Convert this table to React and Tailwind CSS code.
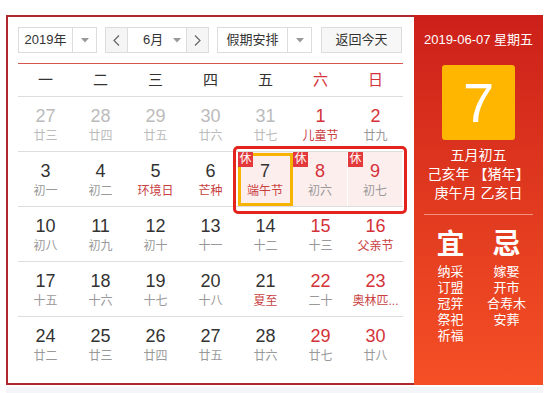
import React from 'react';

const FONT = { fontFamily: '"Liberation Sans", "Noto Sans CJK SC", sans-serif' };

const weeks = [
  [
    { d: 27, l: '廿三', dim: true },
    { d: 28, l: '廿四', dim: true },
    { d: 29, l: '廿五', dim: true },
    { d: 30, l: '廿六', dim: true },
    { d: 31, l: '廿七', dim: true },
    { d: 1, l: '儿童节', red: true, fest: true },
    { d: 2, l: '廿九', red: true },
  ],
  [
    { d: 3, l: '初一' },
    { d: 4, l: '初二' },
    { d: 5, l: '环境日', fest: true },
    { d: 6, l: '芒种', fest: true },
    { d: 7, l: '端午节', fest: true, rest: true, today: true },
    { d: 8, l: '初六', red: true, rest: true },
    { d: 9, l: '初七', red: true, rest: true },
  ],
  [
    { d: 10, l: '初八' },
    { d: 11, l: '初九' },
    { d: 12, l: '初十' },
    { d: 13, l: '十一' },
    { d: 14, l: '十二' },
    { d: 15, l: '十三', red: true },
    { d: 16, l: '父亲节', red: true, fest: true },
  ],
  [
    { d: 17, l: '十五' },
    { d: 18, l: '十六' },
    { d: 19, l: '十七' },
    { d: 20, l: '十八' },
    { d: 21, l: '夏至', fest: true },
    { d: 22, l: '二十', red: true },
    { d: 23, l: '奥林匹...', red: true, fest: true },
  ],
  [
    { d: 24, l: '廿二' },
    { d: 25, l: '廿三' },
    { d: 26, l: '廿四' },
    { d: 27, l: '廿五' },
    { d: 28, l: '廿六' },
    { d: 29, l: '廿七', red: true },
    { d: 30, l: '廿八', red: true },
  ],
];

function Arrow() {
  return (
    <div className="w-[24px] h-full flex items-center justify-center border-l border-[#dcdcdc]">
      <svg width="8" height="5" viewBox="0 0 8 5">
        <path d="M0 0 L8 0 L4 4.5 Z" fill="#999" />
      </svg>
    </div>
  );
}

function DayCell({ c }) {
  let numColor = 'text-[#333]';
  if (c.dim) numColor = 'text-[#bbb]';
  else if (c.red) numColor = 'text-[#d4323a]';
  let lunarColor = 'text-[#999]';
  if (c.dim) lunarColor = 'text-[#bbb]';
  else if (c.fest) lunarColor = 'text-[#c9403f]';
  return (
    <div
      className={`relative w-[55px] h-full flex flex-col items-center pt-[8px] ${
        c.rest ? 'bg-[#fdeeee] border-r border-white' : ''
      }`}
    >
      {c.today && (
        <div className="absolute left-0 top-[1px] w-[55px] h-[53px] border-[3px] border-[#f6b400]" />
      )}
      {c.rest && (
        <div className="absolute left-0 top-0 w-[15px] h-[15px] bg-[#e4393c] text-white text-[12px] leading-[15px] text-center">
          休
        </div>
      )}
      <div className={`text-[18px] leading-[22px] ${numColor}`}>{c.d}</div>
      <div className={`text-[12px] leading-[16px] mt-[1px] ${lunarColor}`}>{c.l}</div>
    </div>
  );
}

export default function App() {
  return (
    <div className="w-[557px] h-[393px] bg-white overflow-hidden" style={FONT}>
      <div className="ml-[6px] mt-[15px] w-[537px] h-[370px] flex">
        {/* Calendar */}
        <div className="w-[408px] h-full border-l-2 border-t-2 border-b-2 border-[#b0282d] pl-[10px] pt-[10px]">
          <div className="flex h-[26px] text-[13px] text-[#333]">
            <div className="flex w-[79px] h-full border border-[#dcdcdc]">
              <div className="flex-1 flex items-center justify-center">2019年</div>
              <Arrow />
            </div>
            <div className="flex w-[104px] h-full border border-[#dcdcdc] ml-[8px]">
              <div className="w-[22px] bg-[#f5f5f5] border-r border-[#dcdcdc] flex items-center justify-center">
                <svg width="7" height="11" viewBox="0 0 7 11">
                  <path d="M6 0.5 L1 5.5 L6 10.5" stroke="#666" fill="none" strokeWidth="1.2" />
                </svg>
              </div>
              <div className="flex-1 flex items-center pl-[15px]">6月</div>
              <div className="w-[18px] flex items-center justify-center">
                <svg width="8" height="5" viewBox="0 0 8 5">
                  <path d="M0 0 L8 0 L4 4.5 Z" fill="#999" />
                </svg>
              </div>
              <div className="w-[22px] bg-[#f5f5f5] border-l border-[#dcdcdc] flex items-center justify-center">
                <svg width="7" height="11" viewBox="0 0 7 11">
                  <path d="M1 0.5 L6 5.5 L1 10.5" stroke="#666" fill="none" strokeWidth="1.2" />
                </svg>
              </div>
            </div>
            <div className="flex w-[95px] h-full border border-[#dcdcdc] ml-[8px]">
              <div className="flex-1 flex items-center justify-center">假期安排</div>
              <Arrow />
            </div>
            <div className="w-[81px] h-full border border-[#dcdcdc] bg-[#f7f7f7] ml-[9px] flex items-center justify-center">
              返回今天
            </div>
          </div>

          <div className="w-[385px] mt-[10px] border-t border-[#d9534f]">
            <div className="flex h-[33px] border-b border-[#ddd] text-[15px]">
              {['一', '二', '三', '四', '五', '六', '日'].map((w, i) => (
                <div
                  key={w}
                  className={`w-[55px] flex items-center justify-center ${
                    i >= 5 ? 'text-[#d4323a]' : 'text-[#333]'
                  }`}
                >
                  {w}
                </div>
              ))}
            </div>
            {weeks.map((row, ri) => (
              <div
                key={ri}
                className={`relative flex h-[55px] ${ri < 4 ? 'border-b border-[#ddd]' : ''}`}
              >
                {row.map((c, ci) => (
                  <DayCell key={ci} c={c} />
                ))}
                {ri === 1 && (
                  <div className="absolute left-[215px] top-[-6px] w-[174px] h-[68px] border-[3px] border-[#e3231d] rounded-[5px] pointer-events-none" />
                )}
              </div>
            ))}
          </div>
        </div>

        {/* Side panel */}
        <div className="w-[129px] h-full bg-gradient-to-b from-[#cc1f1a] to-[#f44f25] text-white flex flex-col items-center">
          <div className="mt-[16px] text-[13px] leading-[18px]">2019-06-07 星期五</div>
          <div className="mt-[16px] w-[73px] h-[75px] bg-[#ffb600] rounded-[3px] flex items-center justify-center text-[56px] leading-none">
            7
          </div>
          <div className="mt-[6px] text-[14px] leading-[19px] text-center">
            <div>五月初五</div>
            <div>己亥年 【猪年】</div>
            <div>庚午月 乙亥日</div>
          </div>
          <div className="mt-[11px] w-[109px] h-px bg-[#f3907f]" />
          <div className="flex w-[112px] mt-[14px]">
            <div className="w-[56px] flex flex-col items-center">
              <div className="text-[28px] leading-[32px] font-bold">宜</div>
              <div className="text-[13px] leading-[16px] text-center mt-[3px]">
                <div>纳采</div>
                <div>订盟</div>
                <div>冠笄</div>
                <div>祭祀</div>
                <div>祈福</div>
              </div>
            </div>
            <div className="w-[56px] flex flex-col items-center">
              <div className="text-[28px] leading-[32px] font-bold">忌</div>
              <div className="text-[13px] leading-[16px] text-center mt-[3px]">
                <div>嫁娶</div>
                <div>开市</div>
                <div>合寿木</div>
                <div>安葬</div>
              </div>
            </div>
          </div>
        </div>
      </div>
      <div className="ml-[6px] mt-[2px] w-[537px] h-[6px] bg-[#f4f5f9]" />
    </div>
  );
}
